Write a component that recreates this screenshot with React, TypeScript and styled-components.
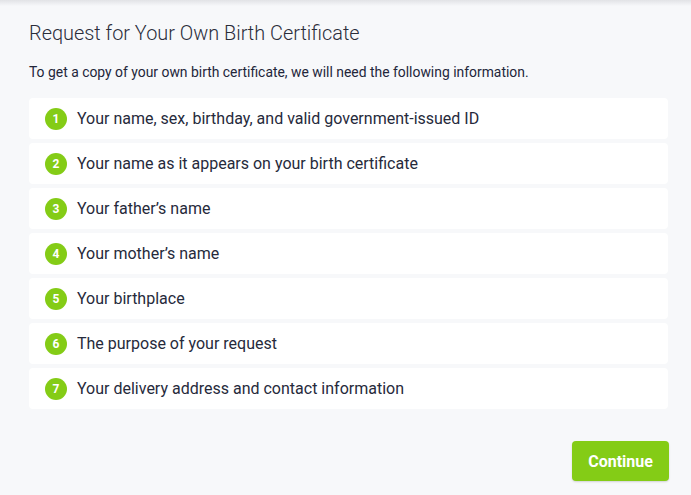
import React from "react";
import styled, { createGlobalStyle } from "styled-components";

const GlobalStyle = createGlobalStyle`
  html, body {
    margin: 0;
    padding: 0;
    background: #f7f8fa;
    font-family: Roboto, "Liberation Sans", sans-serif;
  }
`;

const Page = styled.div`
  width: 691px;
  height: 495px;
  box-sizing: border-box;
  position: relative;
  background: #f7f8fa;
  padding: 20px 23px 0 29px;
  display: flex;
  flex-direction: column;
  &::before {
    content: "";
    position: absolute;
    left: 0;
    right: 0;
    top: 0;
    height: 6px;
    background: linear-gradient(#e2e3e6, rgba(247, 248, 250, 0));
  }
`;

const Title = styled.h1`
  margin: 0;
  font-weight: 300;
  font-size: 19.9px;
  line-height: 28px;
  color: #2a2d3a;
`;

const Intro = styled.p`
  margin: 15px 0 0;
  font-size: 13.9px;
  line-height: 18px;
  color: #23263a;
`;

const List = styled.ol`
  list-style: none;
  margin: 17px 0 0;
  padding: 0;
  display: flex;
  flex-direction: column;
  gap: 4px;
`;

const Item = styled.li`
  height: 41px;
  box-sizing: border-box;
  background: #ffffff;
  border-radius: 4px;
  display: flex;
  align-items: center;
  padding-left: 16px;
  gap: 10px;
  font-size: 16px;
  color: #262a3b;
`;

const Badge = styled.span`
  width: 22px;
  height: 22px;
  border-radius: 50%;
  background: #84cc16;
  color: #fff;
  font-weight: 700;
  font-size: 12px;
  display: flex;
  align-items: center;
  justify-content: center;
  flex-shrink: 0;
`;

const Footer = styled.div`
  display: flex;
  justify-content: flex-end;
  margin-top: 32px;
  padding-right: 0;
`;

const Button = styled.button`
  width: 97px;
  height: 40px;
  margin-right: -1px;
  border: none;
  border-radius: 4px;
  background: #84cc16;
  color: #fff;
  font-family: Roboto, "Liberation Sans", sans-serif;
  font-weight: 700;
  font-size: 16px;
  box-shadow: 0 1px 2px rgba(0, 0, 0, 0.15);
  cursor: pointer;
`;

const items = [
  "Your name, sex, birthday, and valid government-issued ID",
  "Your name as it appears on your birth certificate",
  "Your father\u2019s name",
  "Your mother\u2019s name",
  "Your birthplace",
  "The purpose of your request",
  "Your delivery address and contact information",
];

export default function App() {
  return (
    <>
      <GlobalStyle />
      <Page>
        <Title>Request for Your Own Birth Certificate</Title>
        <Intro>
          To get a copy of your own birth certificate, we will need the following information.
        </Intro>
        <List>
          {items.map((text, i) => (
            <Item key={i}>
              <Badge>{i + 1}</Badge>
              {text}
            </Item>
          ))}
        </List>
        <Footer>
          <Button>Continue</Button>
        </Footer>
      </Page>
    </>
  );
}
